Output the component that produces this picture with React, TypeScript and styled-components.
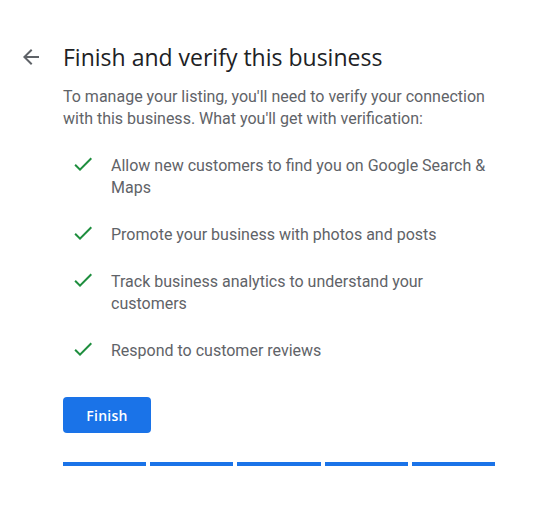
import styled, { createGlobalStyle } from "styled-components"

const GlobalStyle = createGlobalStyle`
    body {
        margin: 0;
        background: #fff;
        font-family: Roboto, "Liberation Sans", sans-serif;
    }
`

const Page = styled.div`
    padding: 43px 0 0 19px;
`

const Header = styled.div`
    display: flex;
    align-items: center;
    gap: 20px;
`

const BackButton = styled.button`
    display: flex;
    width: 24px;
    height: 24px;
    padding: 0;
    border: none;
    background: none;
    color: #5f6368;
    cursor: pointer;
`

const Title = styled.h1`
    margin: 0;
    font-family: "Open Sans", Roboto, sans-serif;
    font-size: 23px;
    font-weight: 400;
    line-height: 28px;
    color: #202124;
`

const Content = styled.div`
    width: 432px;
    margin-left: 44px;
`

const Intro = styled.p`
    margin: 15px 0 0;
    font-size: 16px;
    line-height: 22px;
    color: #5f6368;
`

const Benefits = styled.ul`
    display: flex;
    flex-direction: column;
    gap: 25px;
    list-style: none;
    margin: 25px 0 0;
    padding: 0;
`

const Benefit = styled.li`
    display: flex;
    align-items: flex-start;
    gap: 16px;
    padding-left: 8px;
    font-size: 16px;
    line-height: 22px;
    color: #5f6368;

    svg {
        flex-shrink: 0;
        margin-top: -3px;
    }
`

const FinishButton = styled.button`
    margin-top: 35px;
    width: 88px;
    height: 36px;
    border: none;
    border-radius: 4px;
    background: #1a73e8;
    color: #fff;
    font-family: "Open Sans", Roboto, sans-serif;
    font-size: 14px;
    font-weight: 600;
    letter-spacing: 0.25px;
    cursor: pointer;
`

const Progress = styled.div`
    display: flex;
    gap: 4px;
    margin-top: 29px;
`

const Step = styled.div<{ $done: boolean }>`
    flex: 1;
    height: 4px;
    background: ${(p) => (p.$done ? "#1a73e8" : "#dadce0")};
`

const CheckIcon = () => (
    <svg width="24" height="24" viewBox="0 0 24 24" fill="#1e8e3e">
        <path d="M9 16.17L4.83 12l-1.42 1.41L9 19 21 7l-1.41-1.41z" />
    </svg>
)

const benefits = [
    "Allow new customers to find you on Google Search & Maps",
    "Promote your business with photos and posts",
    "Track business analytics to understand your customers",
    "Respond to customer reviews",
]

export default function App() {
    return (
        <>
            <GlobalStyle />
            <Page>
                <Header>
                    <BackButton aria-label="Back">
                        <svg width="24" height="24" viewBox="0 0 24 24" fill="currentColor">
                            <path d="M20 11H7.83l5.59-5.59L12 4l-8 8 8 8 1.41-1.41L7.83 13H20v-2z" />
                        </svg>
                    </BackButton>
                    <Title>Finish and verify this business</Title>
                </Header>
                <Content>
                    <Intro>
                        To manage your listing, you'll need to verify your connection
                        with this business. What you'll get with verification:
                    </Intro>
                    <Benefits>
                        {benefits.map((text) => (
                            <Benefit key={text}>
                                <CheckIcon />
                                <span>{text}</span>
                            </Benefit>
                        ))}
                    </Benefits>
                    <FinishButton>Finish</FinishButton>
                    <Progress>
                        {[0, 1, 2, 3, 4].map((i) => (
                            <Step key={i} $done={true} />
                        ))}
                    </Progress>
                </Content>
            </Page>
        </>
    )
}
